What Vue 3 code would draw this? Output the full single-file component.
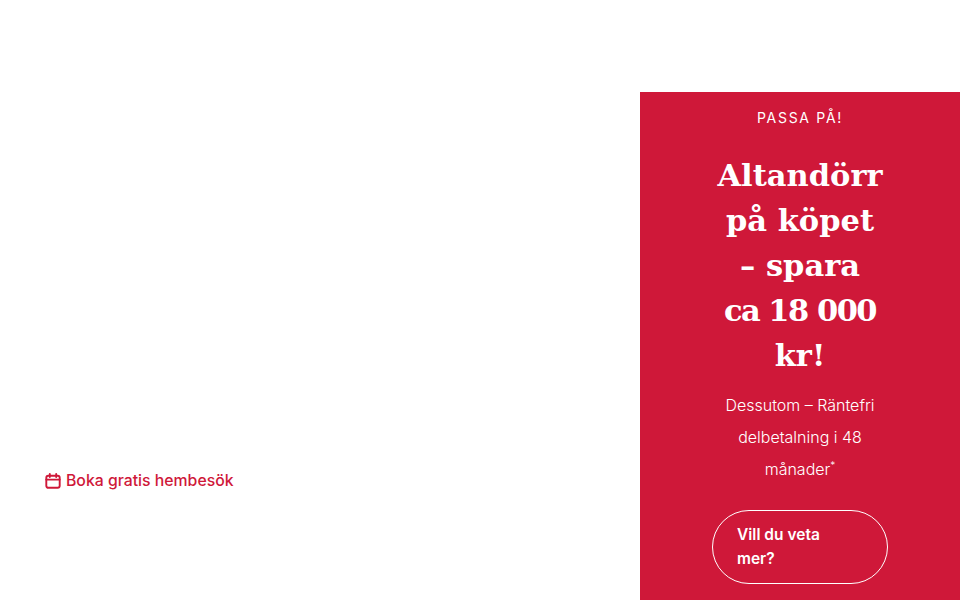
<template>
  <div class="page">
    <main class="left">
      <a class="book" href="#">
        <svg class="cal" viewBox="0 0 16 16" width="16" height="16" fill="none" stroke="currentColor" stroke-width="1.9" stroke-linecap="round" stroke-linejoin="round">
          <rect x="1.3" y="2.8" width="13.4" height="12" rx="2" />
          <path d="M1.3 6.6h13.4M4.8 1v3M11.2 1v3" />
        </svg>
        <span>Boka gratis hembesök</span>
      </a>
    </main>
    <aside class="panel">
      <p class="eyebrow">PASSA PÅ!</p>
      <h1 class="title">Altandörr<br />på köpet<br />– spara<br /><span class="tight">ca 18 000</span><br />kr!</h1>
      <p class="lead">Dessutom – Räntefri<br />delbetalning i 48<br />månader<sup>*</sup></p>
      <a class="cta" href="#">Vill du veta<br />mer?</a>
    </aside>
  </div>
</template>

<script setup>
</script>

<style>
html, body { margin: 0; background: #fff; }
</style>

<style scoped>
.page {
  display: flex;
  width: 960px;
  height: 600px;
  overflow: hidden;
  font-family: "Inter", "Lato", sans-serif;
}
.left {
  flex: 1;
  padding: 471px 0 0 45px;
  box-sizing: border-box;
}
.book {
  display: inline-flex;
  align-items: center;
  gap: 5px;
  height: 19px;
  color: #cf1839;
  font-size: 15.8px;
  font-weight: 500;
  text-decoration: none;
  white-space: nowrap;
}
.cal { flex: none; }
.panel {
  width: 320px;
  height: 508px;
  margin-top: 92px;
  padding: 16px 72px 0;
  box-sizing: border-box;
  background: #cf1839;
  color: #fff;
  text-align: center;
}
.eyebrow {
  margin: 0;
  font-size: 14px;
  line-height: 20px;
  letter-spacing: 1.7px;
  white-space: nowrap;
}
.title {
  margin: 25px -20px 0;
  font-family: "DejaVu Serif", "Liberation Serif", serif;
  font-size: 30.5px;
  line-height: 45px;
  font-weight: 700;
  white-space: nowrap;
}
.tight {
  letter-spacing: -1.5px;
}
.lead {
  margin: 11px -20px 0;
  font-size: 16px;
  line-height: 32px;
  font-weight: 300;
  white-space: nowrap;
}
.lead sup {
  font-size: 10px;
  line-height: 0;
}
.cta {
  display: block;
  margin-top: 25px;
  box-sizing: border-box;
  height: 74px;
  padding: 12px 24px;
  border: 1px solid #fff;
  border-radius: 37px;
  color: #fff;
  font-size: 15.5px;
  line-height: 24px;
  font-weight: 600;
  text-align: left;
  text-decoration: none;
  white-space: nowrap;
}
</style>
